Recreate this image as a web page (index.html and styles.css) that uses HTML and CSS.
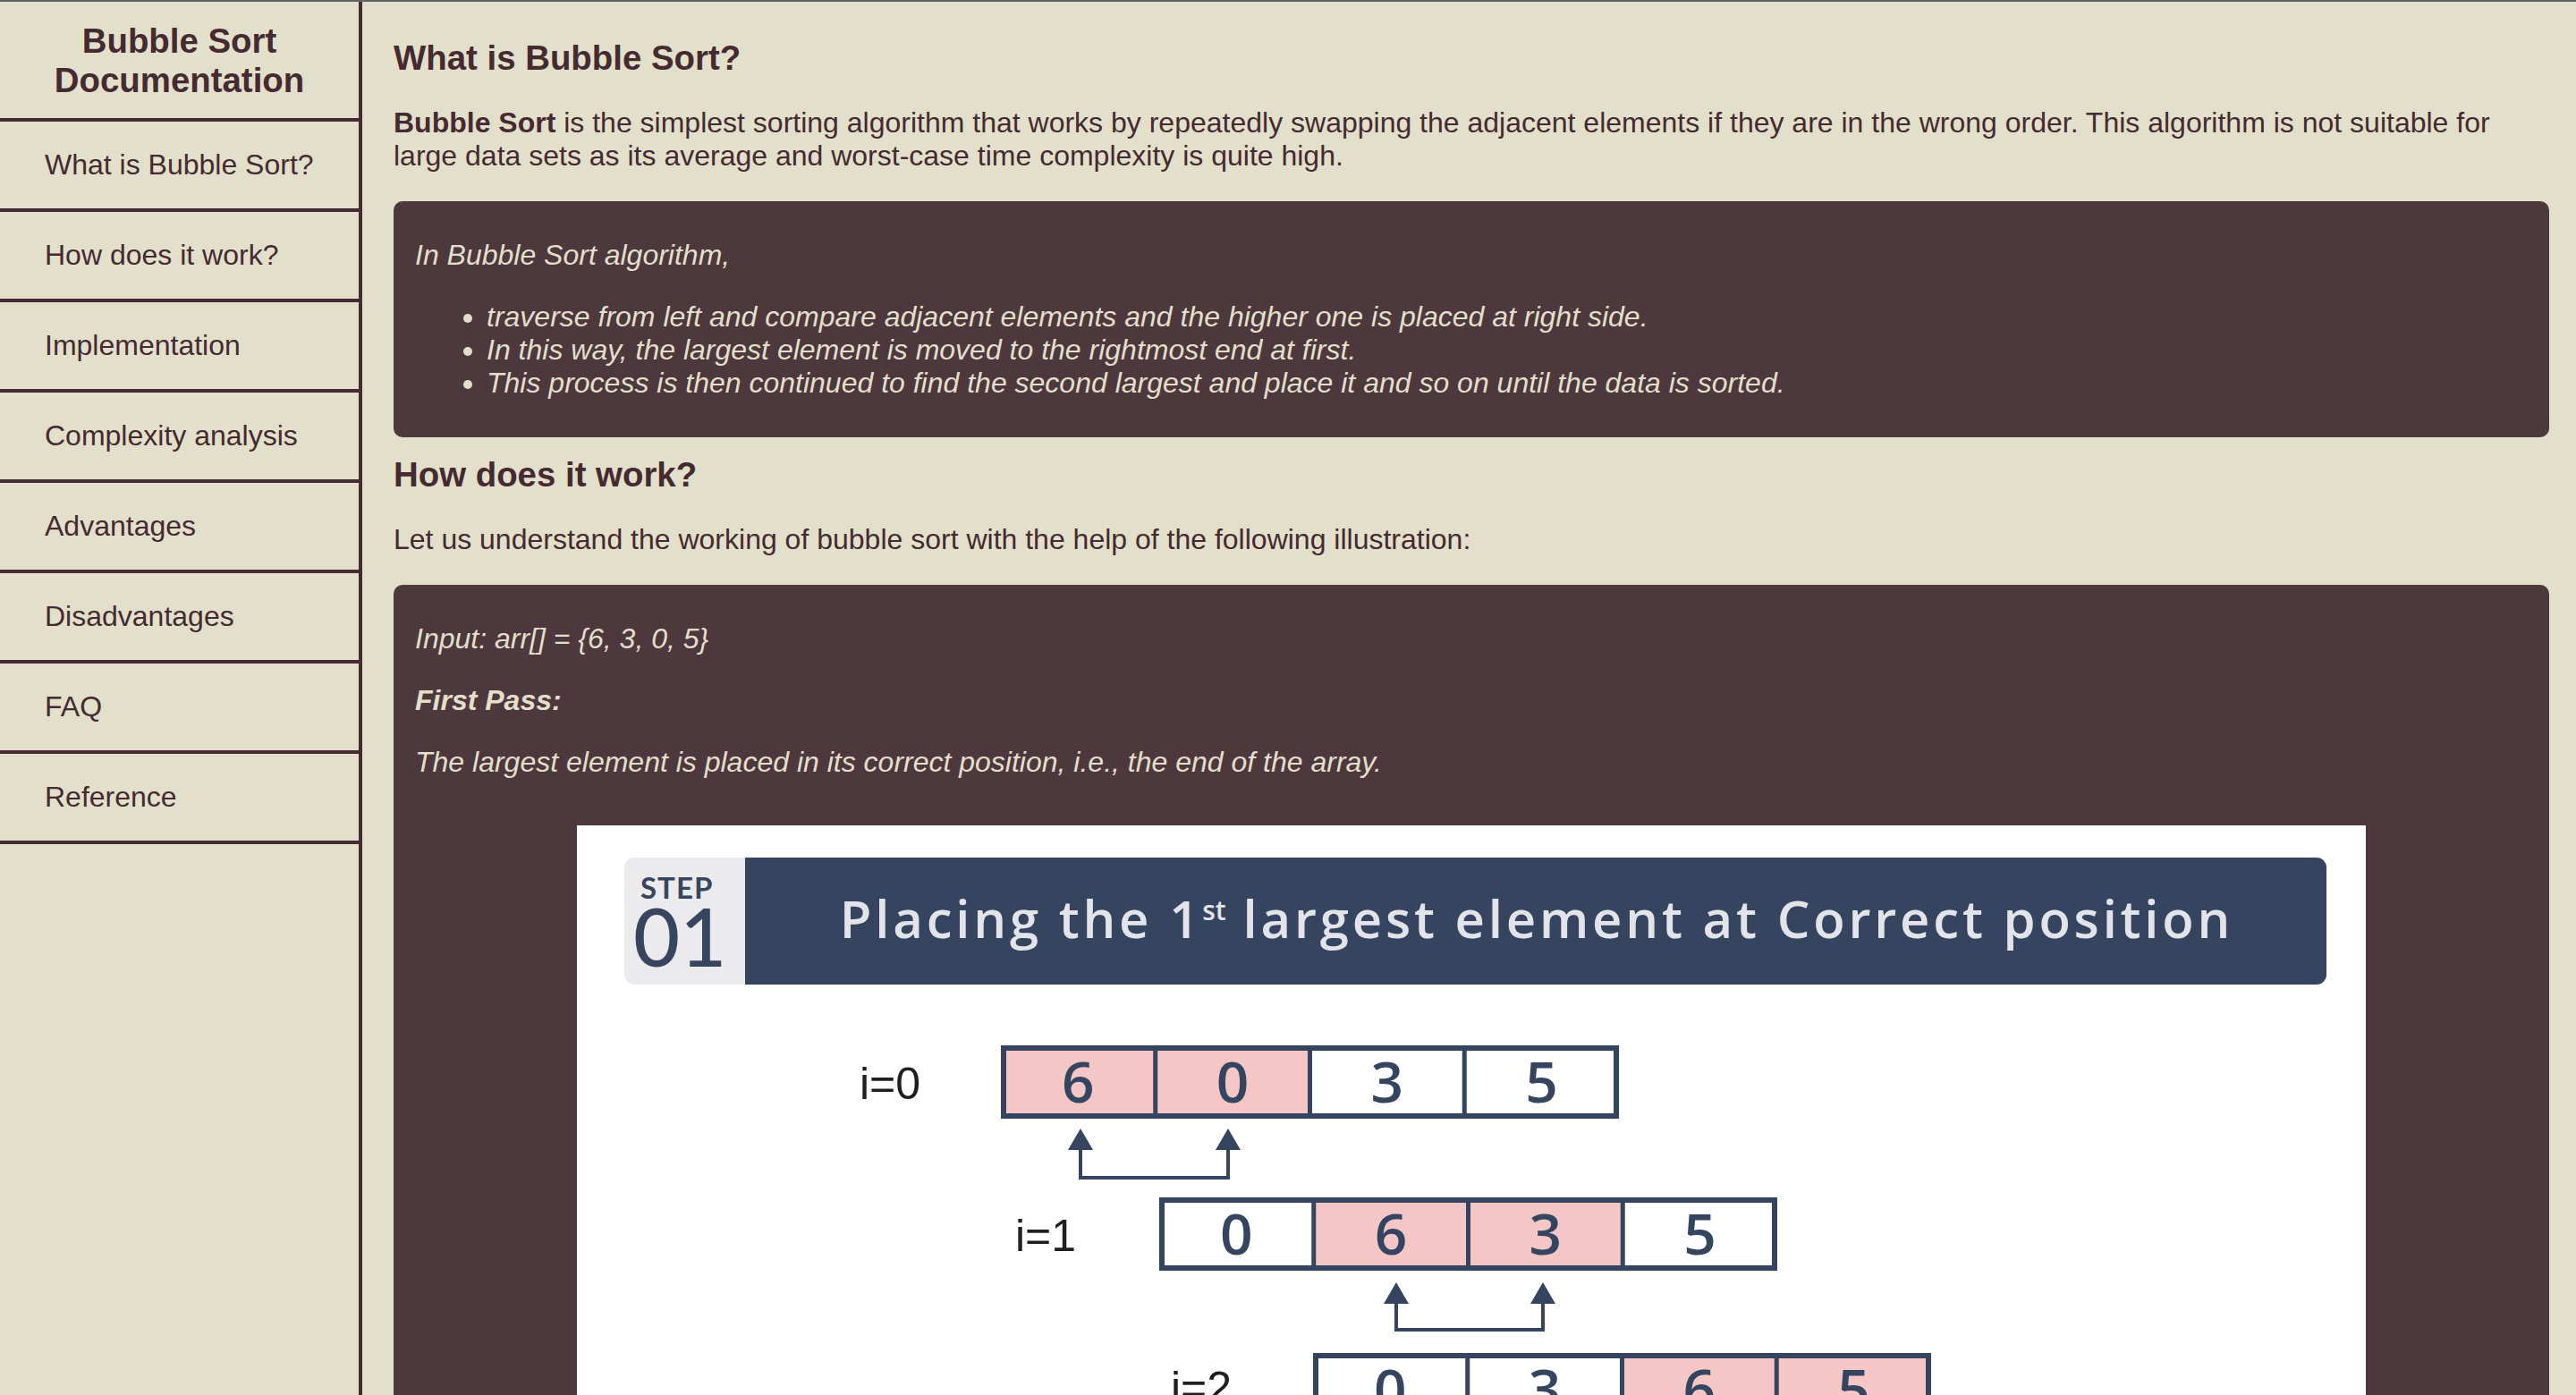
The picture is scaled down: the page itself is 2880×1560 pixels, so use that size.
FILE: index.html
```html
<!DOCTYPE html>
<html lang="en">
<head>
<meta charset="utf-8">
<title>Bubble Sort Documentation</title>
<link rel="stylesheet" href="styles.css">
</head>
<body>
<div class="page">
  <nav class="sidebar">
    <header class="sidebar-title">Bubble Sort Documentation</header>
    <a class="nav-link" href="#what">What is Bubble Sort?</a>
    <a class="nav-link" href="#how">How does it work?</a>
    <a class="nav-link" href="#impl">Implementation</a>
    <a class="nav-link" href="#complexity">Complexity analysis</a>
    <a class="nav-link" href="#adv">Advantages</a>
    <a class="nav-link" href="#disadv">Disadvantages</a>
    <a class="nav-link" href="#faq">FAQ</a>
    <a class="nav-link" href="#ref">Reference</a>
  </nav>
  <main class="main">
    <section class="section" id="what">
      <h2 class="section-title">What is Bubble Sort?</h2>
      <p class="text"><strong>Bubble Sort</strong> is the simplest sorting algorithm that works by repeatedly swapping the adjacent elements if they are in the wrong order. This algorithm is not suitable for large data sets as its average and worst-case time complexity is quite high.</p>
      <div class="note">
        <p class="text">In Bubble Sort algorithm,</p>
        <ul class="list">
          <li>traverse from left and compare adjacent elements and the higher one is placed at right side.</li>
          <li>In this way, the largest element is moved to the rightmost end at first.</li>
          <li>This process is then continued to find the second largest and place it and so on until the data is sorted.</li>
        </ul>
      </div>
    </section>
    <section class="section section-how" id="how">
      <h2 class="section-title">How does it work?</h2>
      <p class="text">Let us understand the working of bubble sort with the help of the following illustration:</p>
      <div class="note">
        <p class="text">Input: arr[] = {6, 3, 0, 5}</p>
        <p class="text"><strong>First Pass:</strong></p>
        <p class="text">The largest element is placed in its correct position, i.e., the end of the array.</p>
        <div class="figure">
          <svg class="figure-svg" width="2000" height="1000" viewBox="0 0 2000 1000" xmlns="http://www.w3.org/2000/svg">
            <rect x="0" y="0" width="2000" height="1000" fill="#ffffff"/>
            <!-- step header -->
            <rect x="53" y="36" width="160" height="142" rx="11" fill="#ebebed"/>
            <rect x="188" y="36" width="1768" height="142" rx="11" fill="#36455f"/>
            <rect x="188" y="36" width="30" height="142" fill="#36455f"/>
            <text class="step-label" x="71" y="82">STEP</text>
            <text class="step-num" x="63" y="158">01</text>
            <text class="step-title" x="1073" y="126" text-anchor="middle">Placing the 1<tspan class="sup" dy="-20">st</tspan><tspan dy="20"> largest element at Correct position</tspan></text>

            <!-- row i=0 -->
            <text class="row-label" x="316" y="306">i=0</text>
            <g transform="translate(474,246)">
              <rect x="0" y="0" width="172.75" height="82" fill="#f4c6c6"/>
              <rect x="172.75" y="0" width="172.75" height="82" fill="#f4c6c6"/>
              <rect x="3" y="3" width="685" height="76" fill="none" stroke="#36455f" stroke-width="6"/>
              <line x1="172.75" y1="0" x2="172.75" y2="82" stroke="#36455f" stroke-width="5"/>
              <line x1="345.5" y1="0" x2="345.5" y2="82" stroke="#36455f" stroke-width="5"/>
              <line x1="518.25" y1="0" x2="518.25" y2="82" stroke="#36455f" stroke-width="5"/>
              <text class="cell-num" x="86.4" y="64" text-anchor="middle">6</text>
              <text class="cell-num" x="259.1" y="64" text-anchor="middle">0</text>
              <text class="cell-num" x="431.9" y="64" text-anchor="middle">3</text>
              <text class="cell-num" x="604.6" y="64" text-anchor="middle">5</text>
            </g>
            <path d="M563 339 L549 363 L577 363 Z M728 339 L714 363 L742 363 Z" fill="#36455f"/>
            <path d="M563 360 V394 H728 V360" fill="none" stroke="#36455f" stroke-width="4"/>

            <!-- row i=1 -->
            <text class="row-label" x="490" y="476">i=1</text>
            <g transform="translate(651,416)">
              <rect x="172.75" y="0" width="172.75" height="82" fill="#f4c6c6"/>
              <rect x="345.5" y="0" width="172.75" height="82" fill="#f4c6c6"/>
              <rect x="3" y="3" width="685" height="76" fill="none" stroke="#36455f" stroke-width="6"/>
              <line x1="172.75" y1="0" x2="172.75" y2="82" stroke="#36455f" stroke-width="5"/>
              <line x1="345.5" y1="0" x2="345.5" y2="82" stroke="#36455f" stroke-width="5"/>
              <line x1="518.25" y1="0" x2="518.25" y2="82" stroke="#36455f" stroke-width="5"/>
              <text class="cell-num" x="86.4" y="64" text-anchor="middle">0</text>
              <text class="cell-num" x="259.1" y="64" text-anchor="middle">6</text>
              <text class="cell-num" x="431.9" y="64" text-anchor="middle">3</text>
              <text class="cell-num" x="604.6" y="64" text-anchor="middle">5</text>
            </g>
            <path d="M916 511 L902 535 L930 535 Z M1080 511 L1066 535 L1094 535 Z" fill="#36455f"/>
            <path d="M916 532 V564 H1080 V532" fill="none" stroke="#36455f" stroke-width="4"/>

            <!-- row i=2 -->
            <text class="row-label" x="664" y="646">i=2</text>
            <g transform="translate(823,590)">
              <rect x="345.5" y="0" width="172.75" height="82" fill="#f4c6c6"/>
              <rect x="518.25" y="0" width="172.75" height="82" fill="#f4c6c6"/>
              <rect x="3" y="3" width="685" height="76" fill="none" stroke="#36455f" stroke-width="6"/>
              <line x1="172.75" y1="0" x2="172.75" y2="82" stroke="#36455f" stroke-width="5"/>
              <line x1="345.5" y1="0" x2="345.5" y2="82" stroke="#36455f" stroke-width="5"/>
              <line x1="518.25" y1="0" x2="518.25" y2="82" stroke="#36455f" stroke-width="5"/>
              <text class="cell-num" x="86.4" y="64" text-anchor="middle">0</text>
              <text class="cell-num" x="259.1" y="64" text-anchor="middle">3</text>
              <text class="cell-num" x="431.9" y="64" text-anchor="middle">6</text>
              <text class="cell-num" x="604.6" y="64" text-anchor="middle">5</text>
            </g>
            <path d="M1258 685 L1244 709 L1272 709 Z M1424 685 L1410 709 L1438 709 Z" fill="#36455f"/>
            <path d="M1258 706 V738 H1424 V706" fill="none" stroke="#36455f" stroke-width="4"/>
          </svg>
        </div>
      </div>
    </section>
  </main>
</div>
</body>
</html>
```

FILE: styles.css
```css
* {
  box-sizing: border-box;
}

html,
body {
  margin: 0;
  padding: 0;
}

body {
  background: #e2e0ca;
  color: #462a31;
  font-family: "Liberation Sans", Arial, Helvetica, sans-serif;
  font-size: 32px;
  border-top: 2px solid #636363;
}

.page {
  display: flex;
  min-height: calc(100vh - 2px);
}

/* ---------- sidebar ---------- */
.sidebar {
  flex: none;
  width: 405px;
  border-right: 4px solid #462a31;
  display: flex;
  flex-direction: column;
}

.sidebar-title {
  height: 134px;
  display: flex;
  align-items: center;
  justify-content: center;
  text-align: center;
  font-weight: bold;
  font-size: 38.4px;
  line-height: 44px;
  border-bottom: 4px solid #462a31;
  padding-top: 2px;
}

.nav-link {
  height: 101px;
  display: flex;
  align-items: center;
  padding-left: 50px;
  color: #462a31;
  text-decoration: none;
  font-size: 32px;
  border-bottom: 4px solid #462a31;
}

/* ---------- main ---------- */
.main {
  flex: 1;
  min-width: 0;
  padding: 20px 30px 0 35px;
}

.section-title {
  font-size: 38.4px;
  font-weight: bold;
  margin: 21px 0 32px;
}

.section-how .section-title {
  margin-top: 20px;
}

.text {
  margin: 32px 0;
  line-height: normal;
}

.note {
  background: #4d383e;
  color: #e2dfca;
  font-style: italic;
  border-radius: 10px;
  padding: 10px 24px;
  margin: 0;
}

.list {
  margin: 32px 0;
  padding-left: 80px;
}

.figure {
  width: 2000px;
  margin: 52px auto 0;
}

.figure-svg {
  display: block;
}

/* ---------- illustration text ---------- */
.step-label {
  font-family: Lato, "Open Sans", sans-serif;
  font-weight: bold;
  font-style: normal;
  font-size: 33px;
  letter-spacing: 1px;
  fill: #37455f;
}

.step-num {
  font-family: Lato, "Open Sans", sans-serif;
  font-weight: 500;
  font-style: normal;
  font-size: 90px;
  fill: #37455f;
}

.step-title {
  font-family: "Open Sans", Lato, sans-serif;
  font-weight: 600;
  font-style: normal;
  font-size: 58px;
  letter-spacing: 3.8px;
  fill: #e3e4ea;
}

.sup {
  font-size: 30px;
  letter-spacing: 0;
}

.row-label {
  font-family: "Liberation Sans", Arial, sans-serif;
  font-style: normal;
  font-size: 50px;
  fill: #1f1f1f;
}

.cell-num {
  font-family: "Open Sans", Lato, sans-serif;
  font-style: normal;
  font-weight: 600;
  font-size: 64px;
  fill: #36455f;
}
```
